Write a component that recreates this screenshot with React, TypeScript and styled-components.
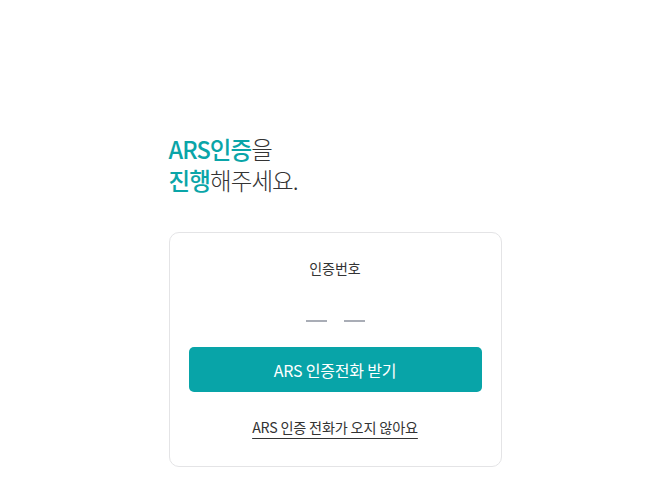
import React from "react";
import styled, { createGlobalStyle } from "styled-components";

const Global = createGlobalStyle`
  html, body { margin: 0; padding: 0; background: #fff; }
  body { font-family: "Noto Sans CJK KR", "Noto Sans", sans-serif; color: #222; }
`;

const Page = styled.main`
  width: 333px;
  margin: 0 auto;
  padding-top: 134px;
`;

const Title = styled.h1`
  margin: 0 0 36px;
  font-size: 23.5px;
  font-weight: 300;
  line-height: 31px;
  letter-spacing: -0.9px;
  color: #333;
`;

const Accent = styled.span`
  color: #0aa5a8;
  font-weight: 500;
`;

const Card = styled.section`
  border: 1px solid #e4e4e6;
  border-radius: 10px;
  padding: 24px 19px 28px;
  display: flex;
  flex-direction: column;
  align-items: center;
`;

const Label = styled.div`
  font-size: 14px;
  line-height: 22px;
  color: #333;
`;

const Dashes = styled.div`
  display: flex;
  gap: 17px;
  margin-top: 31px;
  height: 22px;
  align-items: center;
`;

const Dash = styled.span`
  width: 21px;
  height: 2px;
  background: #a9adb6;
`;

const Button = styled.button`
  margin-top: 15px;
  width: 100%;
  height: 45px;
  border: none;
  border-radius: 5px;
  background: #08a4a8;
  color: #fff;
  font-family: inherit;
  font-size: 16px;
  letter-spacing: -0.2px;
`;

const Link = styled.a`
  margin-top: 24px;
  font-size: 14.2px;
  line-height: 22px;
  color: #333;
  text-decoration: underline;
  text-decoration-thickness: 1px;
  text-underline-offset: 5px;
  letter-spacing: -0.2px;
`;

export default function App() {
  return (
    <>
      <Global />
      <Page>
        <Title>
          <Accent>ARS인증</Accent>을
          <br />
          <Accent>진행</Accent>해주세요.
        </Title>
        <Card>
          <Label>인증번호</Label>
          <Dashes>
            <Dash />
            <Dash />
          </Dashes>
          <Button>ARS 인증전화 받기</Button>
          <Link>ARS 인증 전화가 오지 않아요</Link>
        </Card>
      </Page>
    </>
  );
}
